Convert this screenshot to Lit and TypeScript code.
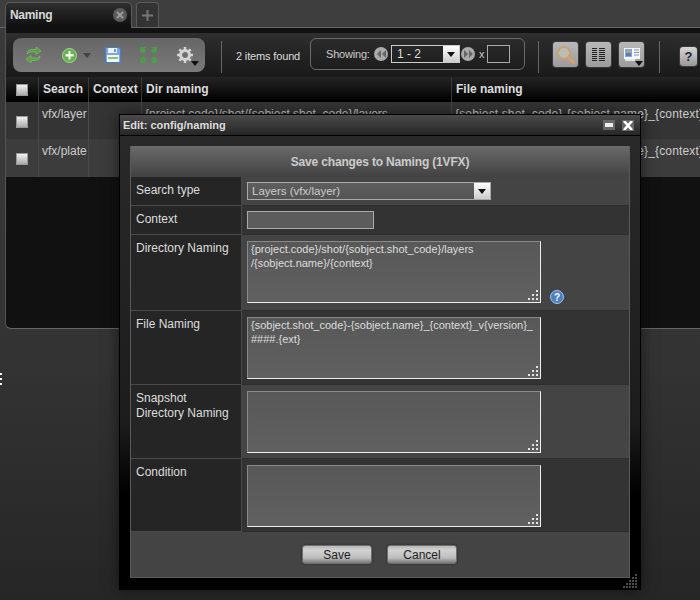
import { LitElement, html, css, svg } from 'lit';
import { customElement } from 'lit/decorators.js';

const GRIP_LIGHT = [[8, 0], [4, 4], [8, 4], [0, 8], [4, 8], [8, 8]];

const grip = svg`<svg class="grip" width="11" height="11" viewBox="0 0 11 11">
  ${GRIP_LIGHT.map(([x, y]) => svg`<rect x=${x} y=${y} width="2" height="2" fill="#e4e4e4"></rect>`)}
</svg>`;

const icons = {
  refresh: html`<svg width="17" height="16" viewBox="0 0 17 16">
    <path d="M2 7c0-3 2-4.500 5-4.500h4V0l5 4-5 3.500V5H7C5 5 3.500 5.500 2 7z" fill="#58a246" stroke="#86c470" stroke-width=".6"></path>
    <path d="M15 9c0 3-2 4.500-5 4.500H6V16L1 12l5-3.500V11h4c2 0 3.500-.5 5-2z" fill="#58a246" stroke="#86c470" stroke-width=".6"></path>
  </svg>`,
  add: html`<svg width="15" height="15" viewBox="0 0 15 15">
    <circle cx="7.500" cy="7.500" r="7" fill="#68b050" stroke="#a6d890"></circle>
    <path d="M3.500 6h3V3h2v3h3v2.500h-3v3h-2v-3h-3z" fill="#f4f8f0"></path>
  </svg>`,
  floppy: html`<svg width="16" height="16" viewBox="0 0 16 16">
    <path d="M.5.500h13l2 2v13H.5z" fill="#7aa6e4" stroke="#4a7cc6"></path>
    <rect x="3" y="1" width="9" height="5" fill="#eef3fb"></rect>
    <rect x="9" y="2" width="2" height="3" fill="#6a96d8"></rect>
    <rect x="2" y="8" width="12" height="7" fill="#f2f6ee"></rect>
    <rect x="3" y="10" width="10" height="2" fill="#8cc474"></rect>
  </svg>`,
  expand: html`<svg width="17" height="16" viewBox="0 0 17 16">
    <g fill="#4f9c48">
      <path d="M0 0h6L4.500 1.500 6.500 3.500 3.500 6.500 1.500 4.500 0 6z"></path>
      <path d="M17 0h-6l1.500 1.500-2 2 3 3 2-2L17 6z"></path>
      <path d="M0 16h6l-1.500-1.500 2-2-3-3-2 2L0 10z"></path>
      <path d="M17 16h-6l1.500-1.500 -2-2 3-3 2 2L17 10z"></path>
    </g>
  </svg>`,
  gear: html`<svg width="16" height="16" viewBox="0 0 16 16">
    <circle cx="8" cy="8" r="4.500" fill="none" stroke="#d4d4d4" stroke-width="3"></circle>
    <path d="M8 0v3M8 13v3M0 8h3M13 8h3M2.300 2.300l2.100 2.100M11.600 11.600l2.100 2.100M13.700 2.300l-2.100 2.100M4.400 11.600l-2.100 2.100" stroke="#d4d4d4" stroke-width="2.500"></path>
  </svg>`,
  search: html`<svg width="20" height="20" viewBox="0 0 20 20">
    <circle cx="8" cy="8" r="6" fill="#bdbdb8" stroke="#c9a070" stroke-width="1.800"></circle>
    <path d="M12.500 12.500l5 5" stroke="#d9a068" stroke-width="3.500" stroke-linecap="round"></path>
  </svg>`,
  list: html`<svg width="13" height="13" viewBox="0 0 13 13">
    <g stroke="#222" stroke-width="1">
      <path d="M0 .5h5M0 2.500h5M0 4.500h5M0 6.500h5M0 8.500h5M0 10.500h5M0 12.500h5"></path>
      <path d="M7 .5h6M7 2.500h6M7 4.500h6M7 6.500h6M7 8.500h6M7 10.500h6M7 12.500h6"></path>
    </g>
  </svg>`,
  card: html`<svg width="16" height="13" viewBox="0 0 16 13">
    <rect width="16" height="11" fill="#f6f8fb"></rect>
    <rect x="1" y="1" width="7" height="8" fill="#7aaae0"></rect>
    <rect x="3" y="2" width="3" height="3" fill="#d89858"></rect>
    <rect x="2" y="5" width="5" height="3" fill="#4f7fc0"></rect>
    <path d="M10 2h5M10 4.500h5M10 7h5" stroke="#7a94b8"></path>
    <path d="M1 11h10v2H1z" fill="#e4e4e4"></path>
  </svg>`,
  rewind: html`<svg width="9" height="8" viewBox="0 0 9 8"><path d="M4 0v8L0 4zM9 0v8L5 4z" fill="#666"></path></svg>`,
  forward: html`<svg width="9" height="8" viewBox="0 0 9 8"><path d="M0 0v8l4-4zM5 0v8l4-4z" fill="#666"></path></svg>`,
  tabClose: html`<svg width="8" height="8" viewBox="0 0 8 8"><path d="M1 1l6 6M7 1L1 7" stroke="#9a9a9a" stroke-width="2"></path></svg>`,
  winClose: html`<svg width="10" height="9" viewBox="0 0 10 9"><path d="M1 0l8 9M9 0L1 9" stroke="#fff" stroke-width="2.600"></path></svg>`,
  plus: html`<svg width="11" height="11" viewBox="0 0 11 11"><path d="M5.500 0v11M0 5.500h11" stroke="#777" stroke-width="2"></path></svg>`,
  caret: html`<svg width="8" height="5" viewBox="0 0 8 5"><path d="M0 0h8L4 5z" fill="#111"></path></svg>`,
  help: html`<svg width="14" height="14" viewBox="0 0 14 14">
    <circle cx="7" cy="7" r="6.500" fill="#4c7fc4" stroke="#a8c4ea"></circle>
    <text x="7" y="10.500" text-anchor="middle" font-size="10" font-weight="700" font-family="Liberation Sans" fill="#fff">?</text>
  </svg>`,
};

const ROWS = [
  { search: 'vfx/layer', dir: '{project.code}/shot/{sobject.shot_code}/layers' },
  { search: 'vfx/plate', dir: '{project.code}/shot/{sobject.shot_code}/plates' },
];
const FILE_TEXT = '{sobject.shot_code}-{sobject.name}_{context}_v{version}_';

@customElement('app-root')
export class AppRoot extends LitElement {
  static styles = css`
    :host {
      display: block;
      position: relative;
      width: 700px;
      height: 600px;
      overflow: hidden;
      background: linear-gradient(#3a3a3a, #333 60%, #262626);
      font-family: 'Liberation Sans', Arial, sans-serif;
      font-size: 12px;
      color: #ccc;
    }
    svg { display: block; }

    /* tabs */
    .tabs {
      height: 25px;
      padding: 2px 0 0 5px;
      display: flex;
      gap: 4px;
      background: #3e3e3e;
      border-bottom: 1px solid #666;
    }
    .tab {
      width: 127px;
      box-sizing: border-box;
      height: 26px;
      border: 1px solid #5a5a5a;
      border-bottom: none;
      border-radius: 5px 5px 0 0;
      background: linear-gradient(#2e2e2e, #0e0e0e);
      display: flex;
      align-items: center;
      justify-content: space-between;
      padding: 0 4px 2px 4px;
      font-weight: 700;
      letter-spacing: -0.3px;
      color: #d8d8d8;
    }
    .tab-close {
      width: 14px;
      height: 14px;
      border-radius: 50%;
      background: #5c5c5c;
      display: flex;
      align-items: center;
      justify-content: center;
    }
    .tab-add {
      width: 23px;
      box-sizing: border-box;
      height: 25px;
      border: 1px solid #5a5a5a;
      border-bottom: none;
      border-radius: 4px 4px 0 0;
      background: #333;
      display: flex;
      align-items: center;
      justify-content: center;
    }

    /* main panel */
    .panel {
      margin-left: 5px;
      height: 301px;
      box-sizing: border-box;
      border-left: 1px solid #555;
      border-bottom: 1px solid #666;
      border-bottom-left-radius: 6px;
      background: #111;
      padding-top: 5px;
      overflow: hidden;
    }
    .toolbar {
      height: 44px;
      box-sizing: border-box;
      padding: 5px 0 0 7px;
      background: linear-gradient(#2e2e2e, #191919);
      display: flex;
      align-items: flex-start;
      white-space: nowrap;
    }
    .group {
      width: 192px;
      height: 34px;
      box-sizing: border-box;
      border-radius: 8px;
      background: linear-gradient(#666, #7a7a7a);
      display: flex;
      align-items: center;
      padding-left: 12px;
      flex: none;
    }
    .group .caret-dim { margin-left: 6px; }
    .group .add { margin-left: 20px; }
    .group .floppy { margin-left: 14px; }
    .group .expand { margin-left: 19px; }
    .group .gear { position: relative; margin-left: 20px; }
    .gear .caret { position: absolute; right: -6px; bottom: -3px; }
    .sep {
      width: 1px;
      height: 32px;
      margin-top: 3px;
      background: #666;
      flex: none;
    }
    .found {
      width: 74px;
      margin: 12px 0 0 14px;
      font-size: 11px;
      letter-spacing: -0.15px;
      color: #ddd;
      flex: none;
    }
    .paging {
      width: 215px;
      height: 32px;
      box-sizing: border-box;
      border: 1px solid #6a6a6a;
      border-radius: 6px;
      display: flex;
      align-items: center;
      padding-left: 15px;
      font-size: 11px;
      color: #ccc;
      flex: none;
    }
    .showing { width: 48px; letter-spacing: -0.2px; }
    .round {
      width: 14px;
      height: 14px;
      border-radius: 50%;
      background: #aaa;
      display: flex;
      align-items: center;
      justify-content: center;
    }
    .page-select {
      width: 69px;
      height: 18px;
      box-sizing: border-box;
      margin: 0 1px 0 3px;
      border: 1px solid #ccc;
      display: flex;
      justify-content: space-between;
      align-items: center;
      padding-left: 5px;
      font-size: 12px;
      color: #ddd;
    }
    .page-input {
      width: 23px;
      height: 18px;
      box-sizing: border-box;
      border: 1px solid #aaa;
      margin-left: 2px;
    }
    .arrow-box {
      width: 16px;
      height: 16px;
      background: linear-gradient(#fff, #ccc);
      display: flex;
      align-items: center;
      justify-content: center;
    }
    .tool-btn {
      position: relative;
      width: 25px;
      height: 25px;
      box-sizing: border-box;
      border-radius: 3px;
      background: linear-gradient(#b8b8b8, #9c9c9c);
      box-shadow: 0 0 0 1px #3a3a3a;
      display: flex;
      align-items: center;
      justify-content: center;
      flex: none;
    }
    .tool-btn .caret { position: absolute; right: 1px; bottom: 1px; }
    .help-btn {
      width: 17px;
      height: 19px;
      margin: 9px 0 0 20px;
      border-radius: 3px;
      background: linear-gradient(#d6d6d6, #999);
      box-shadow: 0 0 0 1px #3a3a3a;
      color: #223;
      font-weight: 700;
      font-size: 13px;
      text-align: center;
      line-height: 19px;
      flex: none;
    }

    /* result table */
    .cols {
      display: grid;
      grid-template-columns: 33px 50px 53px 310px 300px;
    }
    .head {
      height: 25px;
      background: linear-gradient(#242424, #000);
      font-weight: 700;
      color: #ddd;
      line-height: 25px;
    }
    .head > div {
      border-right: 1px solid #3a3a3a;
      padding-left: 4px;
      white-space: nowrap;
    }
    .head > div:last-child { border-right: none; }
    .row {
      height: 37px;
      background: #343434;
      line-height: 14px;
    }
    .row.alt { height: 38px; background: #3c3c3c; }
    .row > div {
      border-right: 1px solid #4a4a4a;
      padding: 5px 0 0 3px;
      white-space: nowrap;
      overflow: hidden;
    }
    .row > div:last-child { border-right: none; letter-spacing: 0.15px; }
    .check-cell {
      display: flex;
      align-items: center;
      justify-content: center;
    }
    .row > .check-cell { padding: 2px 0 0; }
    .head > .check-cell { padding: 0; }
    .check {
      width: 12px;
      height: 12px;
      box-sizing: border-box;
      background: linear-gradient(#f2f2f2, #aaa);
      border: 1px solid #999;
    }
    .notch {
      position: absolute;
      left: 0;
      top: 373px;
      display: flex;
      flex-direction: column;
      gap: 3px;
    }
    .notch i { display: block; width: 2px; height: 2px; background: #fff; }

    /* dialog */
    .dialog {
      position: absolute;
      left: 119px;
      top: 114px;
      width: 522px;
      height: 476px;
      box-sizing: border-box;
      border: 1px solid #000;
      background: linear-gradient(#2a2a2a, #1c1c1c 65%, #000 80%);
      box-shadow: 0 0 14px rgba(0, 0, 0, 0.55);
    }
    .title {
      height: 20px;
      background: linear-gradient(#4a4a4a, #262626);
      border-bottom: 1px solid #000;
      display: flex;
      align-items: center;
      justify-content: space-between;
      padding: 0 6px 0 3px;
      font-weight: 700;
      font-size: 11px;
      color: #ddd;
    }
    .title-icons { display: flex; gap: 7px; align-items: center; }
    .min {
      width: 12px;
      height: 10px;
      background: #666;
      display: flex;
      align-items: center;
      justify-content: center;
    }
    .min i { display: block; width: 8px; height: 4px; background: #eee; }
    .x {
      width: 12px;
      height: 11px;
      background: #666;
      display: flex;
      align-items: center;
      justify-content: center;
    }
    .body { padding: 10px 10px 0; }
    .form {
      width: 500px;
      height: 432px;
      box-sizing: border-box;
      border: 1px solid #5a5a5a;
      border-top: none;
      display: grid;
      grid-template-columns: 111px 1fr;
      grid-template-rows: 31px 29px 29px 76px 74px 74px 73px 45px;
    }
    .form-title {
      grid-column: 1 / 3;
      background: linear-gradient(#6a6a6a, #424242);
      text-align: center;
      font-weight: 700;
      letter-spacing: -0.17px;
      color: #ccc;
      line-height: 30px;
      padding-top: 1px;
    }
    .label {
      background: #252525;
      border-right: 1px solid #4a4a4a;
      border-bottom: 1px solid #4a4a4a;
      padding: 6px 5px 0;
      line-height: 15px;
      color: #ddd;
    }
    .value {
      border-bottom: 1px solid #2e2e2e;
      padding: 5px 0 0 5px;
      display: flex;
      align-items: flex-start;
      background: #444;
    }
    .value.dark { background: #333; }
    .value.tall { padding-top: 6px; }
    .select {
      width: 244px;
      height: 18px;
      box-sizing: border-box;
      border: 1px solid #aaa;
      background: linear-gradient(#5e5e5e, #545454);
      display: flex;
      align-items: center;
      justify-content: space-between;
      padding-left: 4px;
      line-height: 18px;
      font-size: 11.500px;
    }
    .text-input {
      width: 127px;
      height: 18px;
      box-sizing: border-box;
      border: 1px solid #aaa;
      background: #5c5c5c;
    }
    .area {
      position: relative;
      width: 294px;
      height: 62px;
      flex: none;
    }
    textarea {
      display: block;
      width: 100%;
      height: 100%;
      box-sizing: border-box;
      margin: 0;
      padding: 0 3px;
      border: 1px solid;
      border-color: #8a8a8a #eee #eee #8a8a8a;
      background: linear-gradient(#585858, #606060);
      font: 11px/14px 'Liberation Sans', Arial, sans-serif;
      color: #ddd;
      resize: none;
      outline: none;
      overflow: hidden;
    }
    .grip { position: absolute; right: 2px; bottom: 2px; }
    .help { margin: 49px 0 0 9px; }
    .footer {
      grid-column: 1 / 3;
      background: #444;
      display: flex;
      justify-content: center;
      gap: 15px;
      padding: 13px 1px 0 0;
    }
    .btn {
      width: 70px;
      height: 19px;
      box-sizing: border-box;
      border: 1px solid #6e6e6e;
      border-radius: 3px;
      background: linear-gradient(#b8b8b8, #d2d2d2 25%, #bdbdbd 70%, #777);
      box-shadow: 0 0 2px #222;
      color: #222;
      font: 12px/16px 'Liberation Sans', Arial, sans-serif;
      padding: 0;
    }
    .resize { position: absolute; right: 2px; bottom: 1px; }
  `;

  private textarea(value: string) {
    return html`<div class="area">
      <textarea .value=${value} spellcheck="false"></textarea>${grip}
    </div>`;
  }

  render() {
    return html`
      <div class="tabs">
        <div class="tab">
          <span>Naming</span>
          <span class="tab-close">${icons.tabClose}</span>
        </div>
        <div class="tab-add">${icons.plus}</div>
      </div>

      <div class="panel">
        <div class="toolbar">
          <div class="group">
            <span>${icons.refresh}</span>
            <span class="add">${icons.add}</span>
            <svg class="caret-dim" width="8" height="5" viewBox="0 0 8 5"><path d="M0 0h8L4 5z" fill="#444"></path></svg>
            <span class="floppy">${icons.floppy}</span>
            <span class="expand">${icons.expand}</span>
            <span class="gear">${icons.gear}<span class="caret">${icons.caret}</span></span>
          </div>
          <div class="sep" style="margin-left:16px"></div>
          <div class="found">2 items found</div>
          <div class="paging">
            <span class="showing">Showing:</span>
            <span class="round">${icons.rewind}</span>
            <div class="page-select"><span>1 - 2</span><span class="arrow-box">${icons.caret}</span></div>
            <span class="round">${icons.forward}</span>
            <span style="margin-left:4px">x</span>
            <div class="page-input"></div>
          </div>
          <div class="sep" style="margin-left:13px"></div>
          <div class="tool-btn" style="margin:4px 0 0 14px">${icons.search}</div>
          <div class="tool-btn" style="margin:4px 0 0 8px">${icons.list}</div>
          <div class="tool-btn" style="margin:4px 0 0 8px">${icons.card}<span class="caret">${icons.caret}</span></div>
          <div class="sep" style="margin-left:15px"></div>
          <div class="help-btn">?</div>
        </div>

        <div class="cols head">
          <div class="check-cell"><div class="check"></div></div>
          <div>Search</div>
          <div>Context</div>
          <div>Dir naming</div>
          <div>File naming</div>
        </div>
        ${ROWS.map((r, i) => html`
          <div class="cols row ${i % 2 ? 'alt' : ''}">
            <div class="check-cell"><div class="check"></div></div>
            <div>${r.search}</div>
            <div></div>
            <div>${r.dir}</div>
            <div>${FILE_TEXT}</div>
          </div>
        `)}
      </div>

      <div class="notch"><i></i><i></i><i></i></div>

      <div class="dialog">
        <div class="title">
          <span>Edit: config/naming</span>
          <span class="title-icons">
            <span class="min"><i></i></span>
            <span class="x">${icons.winClose}</span>
          </span>
        </div>
        <div class="body">
          <div class="form">
            <div class="form-title">Save changes to Naming (1VFX)</div>

            <div class="label">Search type</div>
            <div class="value">
              <div class="select"><span>Layers (vfx/layer)</span><span class="arrow-box">${icons.caret}</span></div>
            </div>

            <div class="label">Context</div>
            <div class="value dark"><div class="text-input"></div></div>

            <div class="label">Directory Naming</div>
            <div class="value tall">
              ${this.textarea('{project.code}/shot/{sobject.shot_code}/layers\n/{sobject.name}/{context}')}
              <span class="help">${icons.help}</span>
            </div>

            <div class="label">File Naming</div>
            <div class="value dark tall">
              ${this.textarea(FILE_TEXT + '\n####.{ext}')}
            </div>

            <div class="label">Snapshot<br />Directory Naming</div>
            <div class="value tall">${this.textarea('')}</div>

            <div class="label">Condition</div>
            <div class="value dark tall">${this.textarea('')}</div>

            <div class="footer">
              <button class="btn">Save</button>
              <button class="btn">Cancel</button>
            </div>
          </div>
        </div>
        <svg class="resize" width="15" height="14" viewBox="0 0 15 14">
          <g fill="#4a4a4a">
            ${[0, 3, 6, 9, 12].map((y, row) =>
              [12, 9, 6, 3, 0].slice(0, row + 1).map(
                (x) => svg`<rect x=${x} y=${y} width="2" height="2"></rect>`,
              ),
            )}
          </g>
        </svg>
      </div>
    `;
  }
}
